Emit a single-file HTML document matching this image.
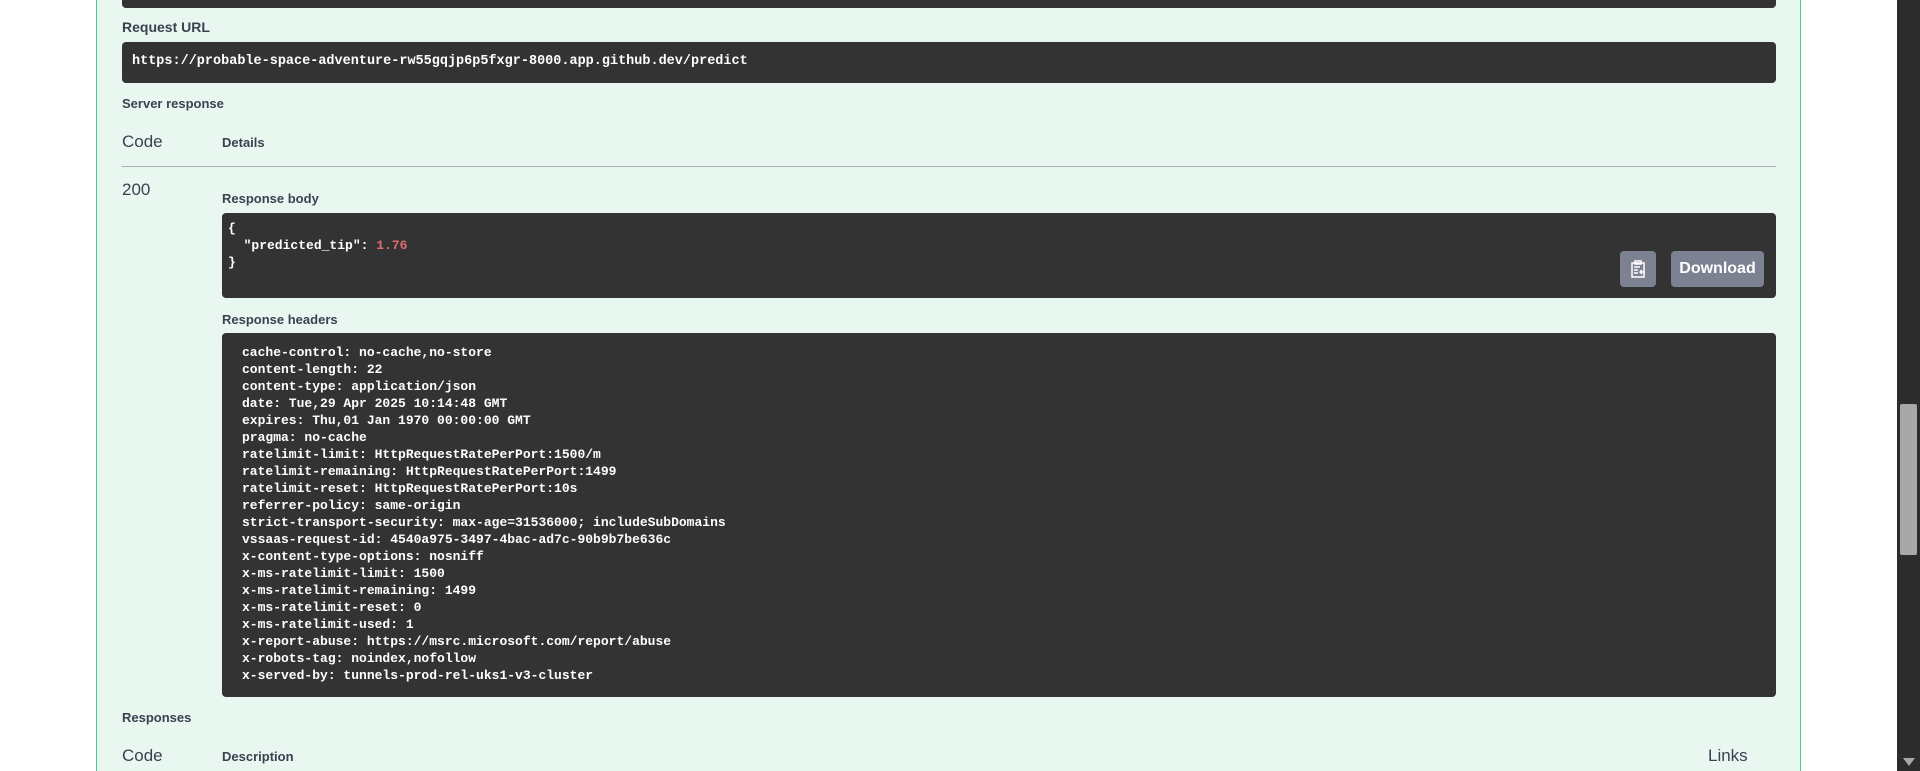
<!DOCTYPE html>
<html style="overflow:hidden;height:771px"><head><meta charset="utf-8"><style>
*{margin:0;padding:0;box-sizing:border-box}
body{width:1920px;height:771px;overflow:hidden;background:#fff;font-family:"Liberation Sans",sans-serif;color:#3b4151;position:relative}
.panel{position:absolute;left:96px;top:-2px;width:1705px;height:773px;background:#e8f8f1;border:1px solid #49cc90;border-bottom:none}
.dark{position:absolute;background:#333;border-radius:4px;color:#fff;font-family:"Liberation Mono",monospace;font-weight:bold}
.lbl{position:absolute;font-size:14px;font-weight:bold;color:#3b4151}
.h{font-size:17px;position:absolute}
pre{font-family:"Liberation Mono",monospace;font-weight:bold;font-size:13px;line-height:17px;color:#fff}
.btn{position:absolute;background:#7d8293;border-radius:4px;color:#fff}
</style></head><body>
<div class="panel"></div>
<div class="dark" style="left:122px;top:-10px;width:1654px;height:18px"></div>
<div class="lbl" style="left:122px;top:19px">Request URL</div>
<div class="dark" style="left:122px;top:42px;width:1654px;height:41px;font-size:13.5px;padding:12px 0 0 10px">https://probable-space-adventure-rw55gqjp6p5fxgr-8000.app.github.dev/predict</div>
<div class="lbl" style="left:122px;top:96px;font-size:13px">Server response</div>
<div class="h" style="left:122px;top:132px">Code</div>
<div class="lbl" style="left:222px;top:135px;font-size:13px">Details</div>
<div style="position:absolute;left:122px;top:166px;width:1654px;height:1px;background:#a5b0b5"></div>
<div style="position:absolute;left:122px;top:180px;font-size:17px">200</div>
<div class="lbl" style="left:222px;top:191px;font-size:13px">Response body</div>
<div class="dark" style="left:222px;top:213px;width:1554px;height:85px;padding:7px 6px">
<pre style="font-size:13px">{
  "predicted_tip": <span style="color:#e06c6c">1.76</span>
}</pre>
<div class="btn" style="left:1398px;top:38px;width:36px;height:36px">
<svg width="36" height="36" viewBox="0 0 36 36"><g fill="none" stroke="#fff" stroke-width="1.5"><rect x="12" y="12" width="12" height="14"/><rect x="15" y="10" width="6" height="3"/><path d="M14 16h6M14 19h4M14 22h4M25 21h-5M22 19l-2 2 2 2"/></g></svg></div>
<div class="btn" style="left:1449px;top:38px;width:93px;height:36px;font-family:'Liberation Sans',sans-serif;font-size:16px;font-weight:bold;text-align:center;line-height:36px">Download</div>
</div>
<div class="lbl" style="left:222px;top:312px;font-size:13px">Response headers</div>
<div class="dark" style="left:222px;top:333px;width:1554px;height:364px;padding:11px 20px">
<pre>cache-control: no-cache,no-store
content-length: 22
content-type: application/json
date: Tue,29 Apr 2025 10:14:48 GMT
expires: Thu,01 Jan 1970 00:00:00 GMT
pragma: no-cache
ratelimit-limit: HttpRequestRatePerPort:1500/m
ratelimit-remaining: HttpRequestRatePerPort:1499
ratelimit-reset: HttpRequestRatePerPort:10s
referrer-policy: same-origin
strict-transport-security: max-age=31536000; includeSubDomains
vssaas-request-id: 4540a975-3497-4bac-ad7c-90b9b7be636c
x-content-type-options: nosniff
x-ms-ratelimit-limit: 1500
x-ms-ratelimit-remaining: 1499
x-ms-ratelimit-reset: 0
x-ms-ratelimit-used: 1
x-report-abuse: https://msrc.microsoft.com/report/abuse
x-robots-tag: noindex,nofollow
x-served-by: tunnels-prod-rel-uks1-v3-cluster</pre></div>
<div class="lbl" style="left:122px;top:710px;font-size:13px">Responses</div>
<div class="h" style="left:122px;top:746px">Code</div>
<div class="lbl" style="left:222px;top:749px;font-size:13px">Description</div>
<div class="h" style="left:1708px;top:746px">Links</div>
<div style="position:absolute;left:1897px;top:0;width:23px;height:771px;background:#2c2c2c"></div>
<div style="position:absolute;left:1900px;top:404px;width:17px;height:151px;background:#a8a8a8;border-radius:2px"></div>
<div style="position:absolute;left:1903px;top:758px;width:0;height:0;border-left:6px solid transparent;border-right:6px solid transparent;border-top:8px solid #a8a8a8"></div>
</body></html>
